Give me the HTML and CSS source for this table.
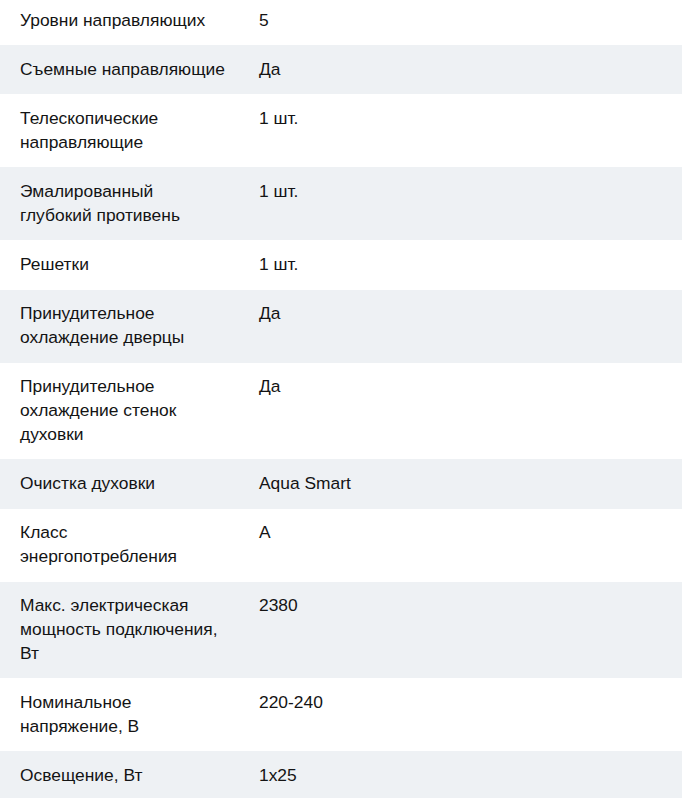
FILE: index.html
```html
<!DOCTYPE html>
<html lang="ru">
<head>
<meta charset="utf-8">
<title>Характеристики</title>
<link rel="stylesheet" href="styles.css">
</head>
<body>
<div class="specs">
  <div class="row"><div class="name">Уровни направляющих</div><div class="value">5</div></div>
  <div class="row alt"><div class="name">Съемные направляющие</div><div class="value">Да</div></div>
  <div class="row"><div class="name">Телескопические направляющие</div><div class="value">1 шт.</div></div>
  <div class="row alt"><div class="name">Эмалированный глубокий противень</div><div class="value">1 шт.</div></div>
  <div class="row"><div class="name">Решетки</div><div class="value">1 шт.</div></div>
  <div class="row alt"><div class="name">Принудительное охлаждение дверцы</div><div class="value">Да</div></div>
  <div class="row"><div class="name">Принудительное охлаждение стенок духовки</div><div class="value">Да</div></div>
  <div class="row alt"><div class="name">Очистка духовки</div><div class="value">Aqua Smart</div></div>
  <div class="row"><div class="name">Класс энергопотребления</div><div class="value">A</div></div>
  <div class="row alt"><div class="name">Макс. электрическая мощность подключения, Вт</div><div class="value">2380</div></div>
  <div class="row"><div class="name">Номинальное напряжение, В</div><div class="value">220-240</div></div>
  <div class="row alt"><div class="name">Освещение, Вт</div><div class="value">1x25</div></div>
</div>
</body>
</html>
```
FILE: styles.css
```css
html, body {
  margin: 0;
  padding: 0;
  background: #ffffff;
}
body {
  font-family: "Liberation Sans", Arial, sans-serif;
  font-size: 17.4px;
  line-height: 23.7px;
  color: #141414;
  overflow: hidden;
}
.specs {
  margin-top: -4.3px;
}
.row {
  display: grid;
  grid-template-columns: 239px 1fr;
  padding: 12.8px 0;
}
.row.alt {
  background: #eef1f4;
}
.name {
  padding: 0 12px 0 20px;
}
.value {
  padding: 0 20px;
}
```
